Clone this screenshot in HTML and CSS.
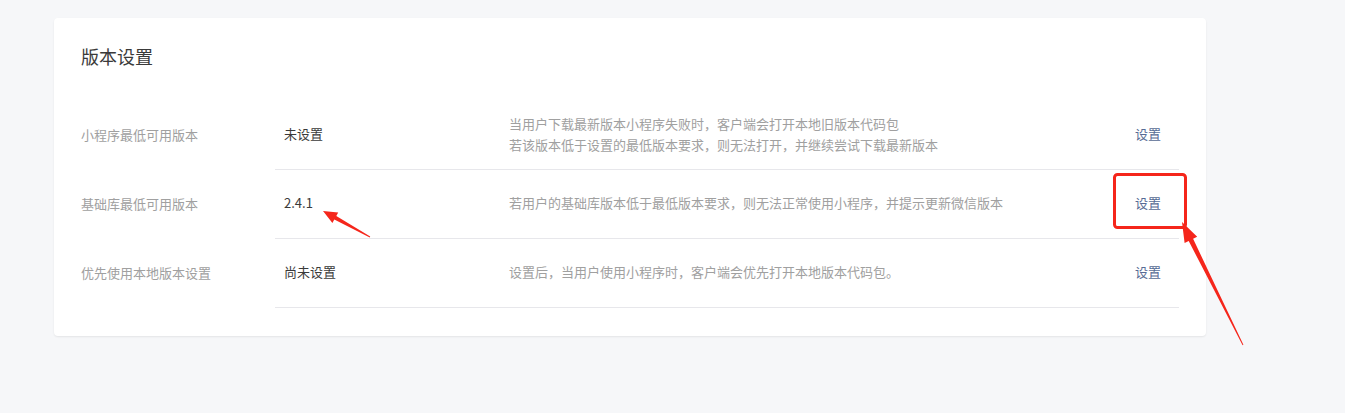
FILE: index.html
```html
<!DOCTYPE html>
<html lang="zh-CN">
<head>
    <meta charset="UTF-8">
    <title>版本设置</title>
    <link rel="stylesheet" href="styles.css">
</head>
<body>
    <div class="panel">
        <h2 class="panel-title">版本设置</h2>

        <div class="setting-row">
            <div class="setting-label">小程序最低可用版本</div>
            <div class="setting-body">
                <div class="setting-value">未设置</div>
                <div class="setting-desc">
                    当用户下载最新版本小程序失败时，客户端会打开本地旧版本代码包<br>
                    若该版本低于设置的最低版本要求，则无法打开，并继续尝试下载最新版本
                </div>
                <a class="setting-action" href="#">设置</a>
            </div>
        </div>

        <div class="setting-row">
            <div class="setting-label">基础库最低可用版本</div>
            <div class="setting-body">
                <div class="setting-value">2.4.1</div>
                <div class="setting-desc">若用户的基础库版本低于最低版本要求，则无法正常使用小程序，并提示更新微信版本</div>
                <a class="setting-action" href="#">设置</a>
            </div>
        </div>

        <div class="setting-row">
            <div class="setting-label">优先使用本地版本设置</div>
            <div class="setting-body">
                <div class="setting-value">尚未设置</div>
                <div class="setting-desc">设置后，当用户使用小程序时，客户端会优先打开本地版本代码包。</div>
                <a class="setting-action" href="#">设置</a>
            </div>
        </div>
    </div>

    <!-- screenshot annotations -->
    <svg class="marks" width="1345" height="413" viewBox="0 0 1345 413">
        <rect x="1114.5" y="174.5" width="71" height="53" rx="3" fill="none" stroke="#f5261b" stroke-width="3"/>
        <polygon fill="#f5261b" points="323,211 338.2,212.5 336.3,216.1 370.2,236.6 369.8,237.4 334.3,219.5 332.4,223.1"/>
        <polygon fill="#f5261b" points="1182,222 1197.2,236.8 1193.1,238.8 1243.4,344.8 1242.6,345.2 1188.7,241 1184.6,243"/>
    </svg>
</body>
</html>
```

FILE: styles.css
```css
:root {
    --page-bg: #f6f7f9;
    --text-main: #3a3a3a;
    --text-muted: #a0a0a0;
    --line: #e7e7eb;
    --link: #576b95;
}

body {
    margin: 0;
    background-color: var(--page-bg);
    font-family: "Microsoft YaHei", "Noto Sans CJK SC", "Noto Sans", sans-serif;
    font-size: 13px;
    color: var(--text-main);
    height: 413px;
    position: relative;
}

.panel {
    margin: 18px 0 0 54px;
    width: 1152px;
    box-sizing: border-box;
    padding: 26px 27px 28px 27px;
    background: #fff;
    border-radius: 4px;
    box-shadow: 0 1px 2px rgba(0, 0, 0, 0.08);
}

.panel-title {
    margin: 0 0 33px;
    font-size: 18px;
    font-weight: normal;
    line-height: 24px;
    color: var(--text-main);
}

.setting-row {
    display: flex;
}

.setting-label {
    width: 194px;
    flex: none;
    display: flex;
    align-items: center;
    padding-bottom: 3px;
    color: var(--text-muted);
}

.setting-body {
    flex: 1;
    display: flex;
    align-items: center;
    min-height: 65px;
    padding-bottom: 3px;
    border-bottom: 1px solid var(--line);
}

.setting-value {
    width: 234px;
    flex: none;
    padding-left: 9px;
    box-sizing: border-box;
}

.setting-desc {
    flex: 1;
    color: var(--text-muted);
    line-height: 21px;
}

.setting-action {
    width: 70px;
    padding-right: 18px;
    text-align: right;
    color: var(--link);
    text-decoration: none;
}

.marks {
    position: absolute;
    top: 0;
    left: 0;
    pointer-events: none;
}
```
